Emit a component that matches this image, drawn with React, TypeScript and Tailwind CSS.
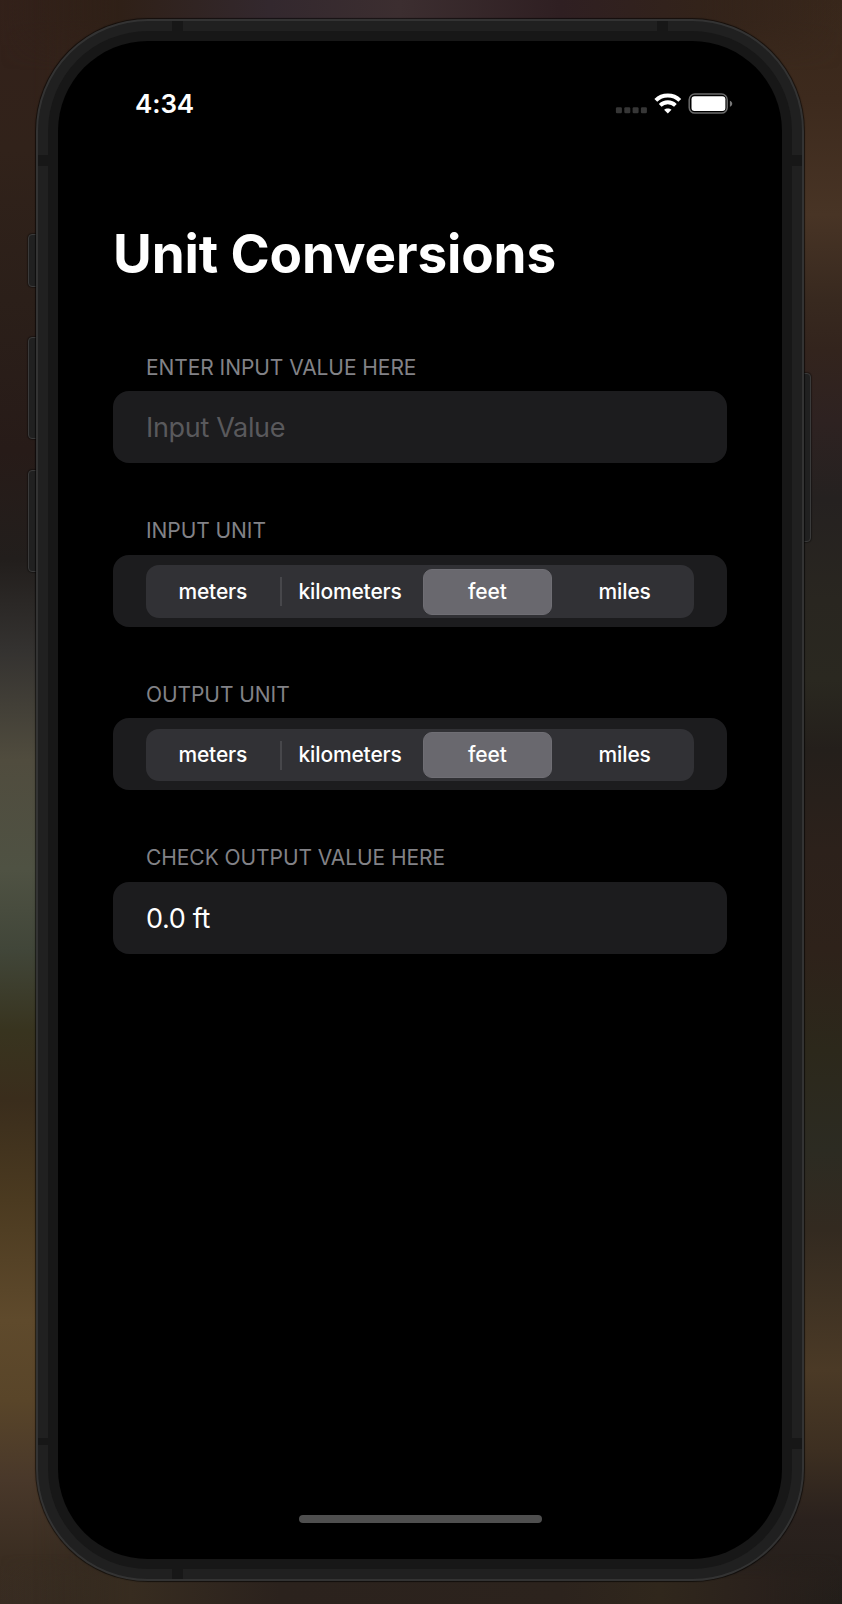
import React from "react";

const units = ["meters", "kilometers", "feet", "miles"];

function StatusBar() {
  return (
    <header className="flex h-[124px] items-start justify-between pt-[47px] pr-[49px] pl-[77px]">
      <time className="text-[26px] leading-[32px] font-semibold tracking-[-0.1px] text-white">4:34</time>
      <svg className="mt-[2px]" width="118" height="30" viewBox="0 -4 118 30" fill="none">
        <g fill="#363636">
          <rect x="0.9" y="13.2" width="6" height="6" rx="1.3" />
          <rect x="9.3" y="13.2" width="6" height="6" rx="1.3" />
          <rect x="17.6" y="13.2" width="6" height="6" rx="1.3" />
          <rect x="25.9" y="13.2" width="6" height="6" rx="1.3" />
        </g>
        <g stroke="#fff">
          <path d="M40.8 6.4C47.3 -0.1 58.3 -0.1 64.8 6.4" strokeWidth="4" />
          <path d="M45.2 11.4C49.4 7.2 56.2 7.2 60.4 11.4" strokeWidth="3.8" />
        </g>
        <path d="M52.8 19.5L49.1 15.8C51.1 13.9 54.5 13.9 56.5 15.8Z" fill="#fff" />
        <rect x="74.2" y="0.1" width="38" height="19" rx="5.6" stroke="#6b6b6b" strokeWidth="1.5" />
        <rect x="76.5" y="2.3" width="33.9" height="14.7" rx="3" fill="#fff" />
        <path d="M114.9 6.7C118 7.5 118 11.9 114.9 12.7Z" fill="#777" />
      </svg>
    </header>
  );
}

function Section({ title, children }: { title: string; children: React.ReactNode }) {
  return (
    <section className="flex h-[163.6px] flex-col">
      <h2 className="pt-[10.5px] pl-[33px] text-[21px] leading-[28px] tracking-[-0.07px] whitespace-nowrap text-[#828287]">
        {title}
      </h2>
      <div className="mt-[9.5px] flex h-[72px] items-center rounded-[16px] bg-[#1c1c1e] px-[33px]">{children}</div>
    </section>
  );
}

function Segments() {
  return (
    <div className="mt-[2px] flex h-[52.5px] w-[548px] shrink-0 items-center gap-[8.6px] rounded-[13px] bg-[#313135] pl-[2.5px]">
      {units.map((u) => (
        <button
          key={u}
          className={
            u === "feet"
              ? "h-[46px] w-[128.7px] shrink-0 rounded-[9px] border border-[#6f6e74] bg-[#69686e] text-[21px] font-medium tracking-[-0.15px] text-white"
              : "relative h-[46px] w-[128.7px] shrink-0 text-[21px] font-medium tracking-[-0.15px] text-white"
          }
        >
          {u}
          {u === "meters" && <span className="absolute top-[8.5px] -right-[4.5px] h-[29px] w-[1.5px] bg-[#47474b]" />}
        </button>
      ))}
    </div>
  );
}

export default function App() {
  return (
    <div className="relative h-[1604px] w-[842px] overflow-hidden bg-[linear-gradient(180deg,#38271b_0px,#3d2a1d_100px,#483425_215px,#38291f_300px,#33241d_350px,#2e2221_420px,#252120_500px,#292620_600px,#2a2820_680px,#241f1b_750px,#2c211b_850px,#2e221a_950px,#2c281b_1050px,#2c2b22_1150px,#332a20_1230px,#4b3a26_1370px,#3d2f21_1450px,#2a211d_1520px,#231e1a_1604px)] font-['Inter',sans-serif]">
      <div className="absolute inset-0 bg-[linear-gradient(180deg,#33211a_0px,#31221a_150px,#2b1f19_300px,#271b18_450px,#221e1c_560px,#343230_650px,#504c3e_760px,#4f5243_870px,#414639_950px,#38341f_1030px,#3a2d1c_1100px,#4b3a20_1200px,#5f4a2c_1320px,#594529_1400px,#49382a_1480px,#3a2d21_1560px,#382c22_1604px)] [mask-image:linear-gradient(90deg,#000_0,#000_30px,transparent_300px)]" />
      <div className="absolute inset-x-0 top-0 h-[70px] bg-[linear-gradient(90deg,#33221a00_0px,#2f2017_120px,#33282e_270px,#3c2e30_400px,#2f1f22_560px,#33231a_700px,#3a271b00_842px)] [mask-image:linear-gradient(#000_20px,transparent)]" />
      <div className="absolute inset-x-0 bottom-0 h-[50px] bg-[linear-gradient(90deg,#382c2200_0px,#372c20_130px,#2b221d_280px,#2c231d_560px,#30271c_660px,#2a211c_760px,#231e1a00_842px)] [mask-image:linear-gradient(0deg,#000_25px,transparent)]" />

      <i className="absolute top-[234px] left-[28px] h-[53px] w-[14px] rounded-[4px] border-[1.5px] border-[#3a3a3a] bg-[#202020] shadow-[0_0_1px_1px_rgba(0,0,0,0.35)]" />
      <i className="absolute top-[337px] left-[28px] h-[102px] w-[14px] rounded-[4px] border-[1.5px] border-[#3a3a3a] bg-[#202020] shadow-[0_0_1px_1px_rgba(0,0,0,0.35)]" />
      <i className="absolute top-[470px] left-[28px] h-[102px] w-[14px] rounded-[4px] border-[1.5px] border-[#3a3a3a] bg-[#202020] shadow-[0_0_1px_1px_rgba(0,0,0,0.35)]" />
      <i className="absolute top-[373px] left-[797px] h-[169px] w-[14px] rounded-[4px] border-[1.5px] border-[#3a3a3a] bg-[#202020] shadow-[0_0_1px_1px_rgba(0,0,0,0.35)]" />

      <div className="relative mt-[19px] ml-[36px] h-[1562px] w-[768px] rounded-[112px] border-2 border-[#333] bg-[#202020] p-[10px] shadow-[0_0_1px_1px_rgba(0,0,0,0.6)]">
        <i className="absolute top-0 left-[134px] h-[10px] w-[11px] bg-[#171717]" />
        <i className="absolute top-0 left-[619px] h-[10px] w-[11px] bg-[#171717]" />
        <i className="absolute bottom-0 left-[134px] h-[10px] w-[11px] bg-[#171717]" />
        <i className="absolute top-[134px] left-0 h-[11px] w-[10px] bg-[#171717]" />
        <i className="absolute top-[134px] right-0 h-[11px] w-[10px] bg-[#171717]" />
        <i className="absolute top-[1417px] left-0 h-[7px] w-[10px] bg-[#171717]" />
        <i className="absolute top-[1417px] right-0 h-[11px] w-[10px] bg-[#171717]" />

        <div className="h-full rounded-[100px] bg-[#171717] p-[10px]">
          <div className="flex h-full flex-col rounded-[90px] bg-black">
            <StatusBar />
            <main className="flex grow flex-col px-[55px]">
              <h1 className="pt-[56px] text-[53px] leading-[66px] font-bold tracking-[-0.13px] whitespace-nowrap text-white">
                Unit Conversions
              </h1>
              <div className="mt-[56px]">
                <Section title="ENTER INPUT VALUE HERE">
                  <input
                    className="mt-[2px] w-full bg-transparent text-[27px] tracking-[-0.33px] text-white outline-none placeholder:text-[#59595c]"
                    placeholder="Input Value"
                  />
                </Section>
                <Section title="INPUT UNIT">
                  <Segments />
                </Section>
                <Section title="OUTPUT UNIT">
                  <Segments />
                </Section>
                <Section title="CHECK OUTPUT VALUE HERE">
                  <output className="mt-[2px] text-[27px] tracking-[-0.33px] text-white">0.0 ft</output>
                </Section>
              </div>
            </main>
            <div className="mb-[36px] h-[8px] w-[243px] self-center rounded-full bg-[#4f4f4f]" />
          </div>
        </div>
      </div>
    </div>
  );
}
